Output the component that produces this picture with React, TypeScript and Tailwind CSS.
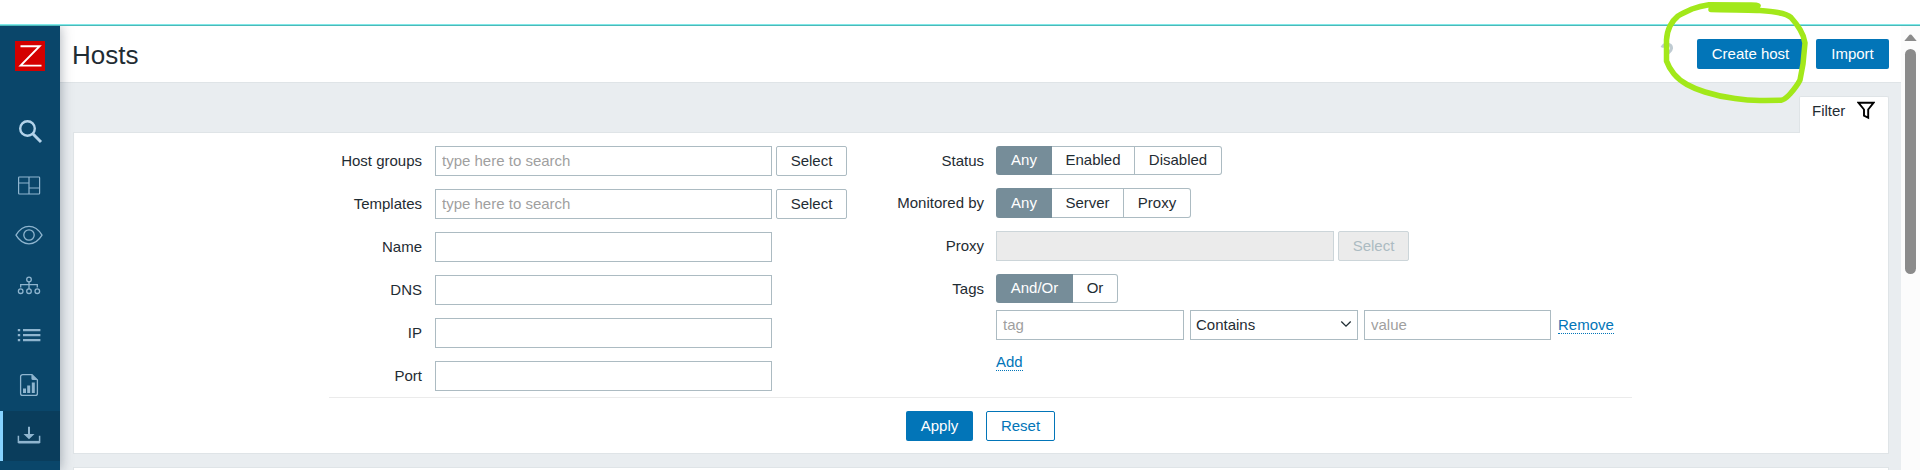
import type { ReactNode } from "react";

const BORDER = "border border-[#acbbc2]";

function Row({ label, labelWidth = "w-[94px]", gap = "ml-3", children }: { label: string; labelWidth?: string; gap?: string; children?: ReactNode }) {
  return (
    <div className="flex">
      <div className={`${labelWidth} shrink-0 text-right leading-[30px]`}>{label}</div>
      <div className={`${gap} flex gap-1`}>{children}</div>
    </div>
  );
}

function FieldRow({ label, children }: { label: string; children?: ReactNode }) {
  return (
    <Row label={label} labelWidth="w-[93px]" gap="ml-[13px]">
      {children}
    </Row>
  );
}

function TextField({ placeholder, width = "w-[337px]" }: { placeholder?: string; width?: string }) {
  return (
    <input
      placeholder={placeholder}
      className={`${BORDER} ${width} h-[30px] bg-white px-[6px] pb-[2px] placeholder:text-[#9f9f9f] outline-none`}
    />
  );
}

function SelectButton() {
  return <button className={`${BORDER} h-[30px] w-[71px] rounded-[2px] bg-white`}>Select</button>;
}

function Segments({ items, height = "h-[29px]" }: { items: [string, string][]; height?: string }) {
  return (
    <div className={`flex ${height}`}>
      {items.map(([text, width], i) => (
        <button
          key={text}
          className={`${width} ${
            i === 0
              ? "rounded-l-[3px] bg-[#768d99] text-white"
              : "border-y border-r border-[#acbbc2] bg-white last:rounded-r-[3px]"
          } whitespace-nowrap`}
        >
          {text}
        </button>
      ))}
    </div>
  );
}

function NavItem({ height = "h-[50px]", active, children }: { height?: string; active?: boolean; children: ReactNode }) {
  return (
    <a
      className={`flex ${height} w-[60px] shrink-0 items-center ${
        active ? "border-l-[3px] border-[#87d3ff] bg-[#0a3d5c] pl-[12px]" : "pl-[15px]"
      } text-[#8fb5cf]`}
    >
      {children}
    </a>
  );
}

function Sidebar() {
  return (
    <nav className="z-10 flex w-[60px] shrink-0 flex-col bg-[#0a466a] shadow-[0_0_12px_0_rgba(0,20,40,0.35)]">
      <div className="flex h-[83px] shrink-0 items-start pt-[15px] pl-[15px]">
        <svg width="30" height="30" viewBox="0 0 30 30">
          <rect width="30" height="30" fill="#d40000" />
          <path d="M5.5 5.2H24.6L5.6 24.6H26.5" fill="none" stroke="#fff" strokeWidth="1.9" />
        </svg>
      </div>
      <NavItem height="h-[52px]">
        <svg width="30" height="30" viewBox="0 1 30 30" fill="none" stroke="#b3d3ea">
          <circle cx="12.5" cy="9.5" r="7.3" strokeWidth="2.4" />
          <path d="M17.8 14.8L26 23" strokeWidth="3" />
        </svg>
      </NavItem>
      <NavItem>
        <svg width="28" height="30" viewBox="0 0 28 30" fill="none" stroke="currentColor" strokeWidth="1.2">
          <rect x="3.6" y="6" width="21" height="17" rx="0.7" />
          <path d="M14 6V23M3.6 12H14M14 17H24.6" />
        </svg>
      </NavItem>
      <NavItem>
        <svg width="28" height="30" viewBox="0 0 28 30" fill="none" stroke="currentColor" strokeWidth="1.3">
          <path d="M1 14.1C8 2.500 20 2.500 27 14.1C20 25.700 8 25.700 1 14.1Z" />
          <circle cx="14" cy="14" r="5.2" />
        </svg>
      </NavItem>
      <NavItem>
        <svg width="28" height="30" viewBox="0 0 28 30" fill="none" stroke="currentColor" strokeWidth="1.3">
          <circle cx="14" cy="8.500" r="2.300" />
          <circle cx="5.700" cy="20.200" r="2.300" />
          <circle cx="14" cy="20.200" r="2.300" />
          <circle cx="22.300" cy="20.200" r="2.300" />
          <path d="M14 10.800V17.900M5.700 16.500V13.600H22.300V16.500" />
        </svg>
      </NavItem>
      <NavItem>
        <svg width="28" height="30" viewBox="0 0 28 30" fill="currentColor">
          <path d="M2.800 8h2.400v2.200h-2.400zM2.800 13h2.400v2.200h-2.400zM2.800 18h2.400v2.200h-2.400zM8 8h17.400v2.200H8zM8 13h17.400v2.200H8zM8 18h17.400v2.200H8z" />
        </svg>
      </NavItem>
      <NavItem>
        <svg width="28" height="30" viewBox="0 -2 28 30" fill="none" stroke="currentColor" strokeWidth="1.300" transform="translate(0 -4)">
          <path d="M17 5.600H7.600a2 2 0 0 0-2 2V24.400a2 2 0 0 0 2 2H20.400a2 2 0 0 0 2-2V11Z" />
          <path d="M16.400 5.200V9.500a1.500 1.500 0 0 0 1.500 1.500H22.800ZM8 19.500h3v4.500H8zM12.200 16.500h3v7.500h-3zM16.800 13.500h3v10.500h-3z" fill="currentColor" stroke="none" />
        </svg>
      </NavItem>
      <NavItem active>
        <svg width="28" height="30" viewBox="0 0 28 30">
          <path d="M13 5.700h2v7.300h4.500L14 18.200 8.500 13h4.500z" fill="currentColor" />
          <path d="M3.400 14.800V21.300H24.600V14.800" fill="none" stroke="currentColor" strokeWidth="1.500" />
          <path d="M3.400 21.200H24.600" stroke="currentColor" strokeWidth="2.600" />
        </svg>
      </NavItem>
    </nav>
  );
}

function Header() {
  return (
    <header className="flex h-[57px] shrink-0 items-start border-b border-[#dfe4e7] bg-white pt-[13px] pr-3 pl-[12px]">
      <h1 className="mt-px text-[26px] leading-[30px]">Hosts</h1>
      <svg className="mt-[3px] ml-auto" width="14" height="14" viewBox="0 0 14 14">
        <path d="M3 5.500C5 0.800 12.700 1 12.500 6.500C12.300 9.500 9 10 8 13" fill="none" stroke="#bfcbd2" strokeWidth="3" />
      </svg>
      <button className="ml-[24px] h-[30px] w-[107px] rounded-[2px] bg-[#0275b8] text-white">Create host</button>
      <button className="ml-3 h-[30px] w-[73px] rounded-[2px] bg-[#0275b8] text-white">Import</button>
    </header>
  );
}

function FilterPanel() {
  return (
    <section className="mt-[13px] flex flex-col">
      <div className="z-[1] -mb-px flex h-[37px] w-[90px] items-start self-end rounded-t-[2px] border border-b-0 border-[#dfe4e7] bg-white pt-[4px] pl-[12px] leading-[20px]">
        Filter
        <svg className="ml-[12px]" width="18" height="20" viewBox="0 0 18 20">
          <path d="M1.500 1.800H16.500L11.200 8.500V16.800L7 14.600V8.500Z" fill="none" stroke="#000" strokeWidth="1.900" />
        </svg>
      </div>
      <div className="h-[322px] border border-[#dfe4e7] bg-white">
        <div className="ml-[255px] w-[1303px]">
          <div className="flex h-[265px] border-b border-[#ebebeb] pt-[13px]">
            <div className="flex w-[561px] flex-col gap-[13px]">
              <FieldRow label="Host groups">
                <TextField placeholder="type here to search" />
                <SelectButton />
              </FieldRow>
              <FieldRow label="Templates">
                <TextField placeholder="type here to search" />
                <SelectButton />
              </FieldRow>
              <FieldRow label="Name"><TextField /></FieldRow>
              <FieldRow label="DNS"><TextField /></FieldRow>
              <FieldRow label="IP"><TextField /></FieldRow>
              <FieldRow label="Port"><TextField /></FieldRow>
            </div>
            <div className="flex flex-col">
              <div className="h-[42px]">
                <Row label="Status">
                  <Segments items={[["Any", "w-[56px]"], ["Enabled", "w-[83px]"], ["Disabled", "w-[87px]"]]} />
                </Row>
              </div>
              <div className="h-[43px]">
                <Row label="Monitored by">
                  <Segments height="h-[30px]" items={[["Any", "w-[56px]"], ["Server", "w-[72px]"], ["Proxy", "w-[67px]"]]} />
                </Row>
              </div>
              <div className="h-[43px]">
                <Row label="Proxy">
                  <div className="h-[30px] w-[338px] border border-[#ccd5d9] bg-[#ebebeb]" />
                  <button className="h-[30px] w-[71px] rounded-[2px] border border-[#ccd5d9] bg-[#ebebeb] text-[#acbbc2]" disabled>
                    Select
                  </button>
                </Row>
              </div>
              <div className="h-[36px]">
                <Row label="Tags">
                  <Segments items={[["And/Or", "w-[77px]"], ["Or", "w-[45px]"]]} />
                </Row>
              </div>
              <div className="ml-[106px] flex items-start gap-[6px]">
                <TextField placeholder="tag" width="w-[188px]" />
                <div className={`${BORDER} flex h-[30px] w-[168px] items-center pl-[5px]`}>
                  Contains
                  <svg className="mr-[5px] mb-[3px] ml-auto" width="12" height="8" viewBox="0 0 12 8">
                    <path d="M1.300 1.500L6 6.200L10.700 1.500" fill="none" stroke="#1f2c33" strokeWidth="1.300" />
                  </svg>
                </div>
                <TextField placeholder="value" width="w-[187px]" />
                <a className="mt-[6px] ml-px border-b border-dotted border-[#0275b8] leading-[17px] text-[#0275b8]">Remove</a>
              </div>
              <a className="mt-[13px] ml-[106px] self-start border-b border-dotted border-[#0275b8] leading-[17px] text-[#0275b8]">Add</a>
            </div>
          </div>
          <div className="flex gap-[13px] pt-[13px] pl-[577px]">
            <button className="h-[30px] w-[67px] rounded-[2px] bg-[#0275b8] text-white">Apply</button>
            <button className="h-[30px] w-[69px] rounded-[2px] border border-[#0275b8] bg-white text-[#0275b8]">Reset</button>
          </div>
        </div>
      </div>
    </section>
  );
}

function Scrollbar() {
  return (
    <div className="flex w-[19px] shrink-0 flex-col bg-[#fcfcfc] pt-[8px] pl-[3px]">
      <svg width="13" height="7" viewBox="0 0 13 7">
        <path d="M0.300 7L5.500 0.800Q6.500 0 7.500 0.800L12.700 7Z" fill="#8b8b8b" />
      </svg>
      <div className="mt-[8px] ml-px h-[225px] w-[11px] rounded-full bg-[#8b8b8b]" />
    </div>
  );
}

export default function App() {
  return (
    <div className="relative flex h-[470px] w-[1920px] flex-col overflow-hidden bg-white font-['Liberation_Sans',Arial,sans-serif] text-[15px] text-[#1f2c33]">
      <div className="h-[26px] shrink-0 border-b border-[#4cb9b9]">
        <div className="h-[25px] border-b border-[#7fe8e8]" />
      </div>
      <div className="flex h-[444px] overflow-hidden">
        <Sidebar />
        <main className="flex min-w-0 flex-1 flex-col bg-[#e9edf0]">
          <Header />
          <div className="flex flex-col pr-3 pl-[13px]">
            <FilterPanel />
            <div className="mt-[13px] h-[40px] border border-[#dfe4e7] bg-white" />
          </div>
        </main>
        <Scrollbar />
      </div>
      <svg className="absolute top-0 left-[1660px]" width="150" height="106" viewBox="1660 0 150 106" fill="none" stroke="#a2e81a" strokeWidth="5.500" strokeLinecap="round" strokeLinejoin="round">
        <path d="M1758 5.800C1756 4.500 1752 5 1746 5L1709 4.700Q1700 6 1692 9Q1683 13 1678 16Q1673 20 1670 26Q1667 32 1666.500 40L1666.500 61Q1669 68 1674 74Q1679 80 1687 84.500Q1695 89 1705 92Q1719 96.500 1735 98.500Q1750 101 1765 100.500L1781 100.300Q1785 99.500 1790 94Q1797 86 1800 80L1803 64L1805 43Q1804 36 1800 29.500Q1796 23 1791 17.500C1786 12.500 1771 11.300 1760 10.500Q1750 10 1711 9.500" />
      </svg>
    </div>
  );
}
